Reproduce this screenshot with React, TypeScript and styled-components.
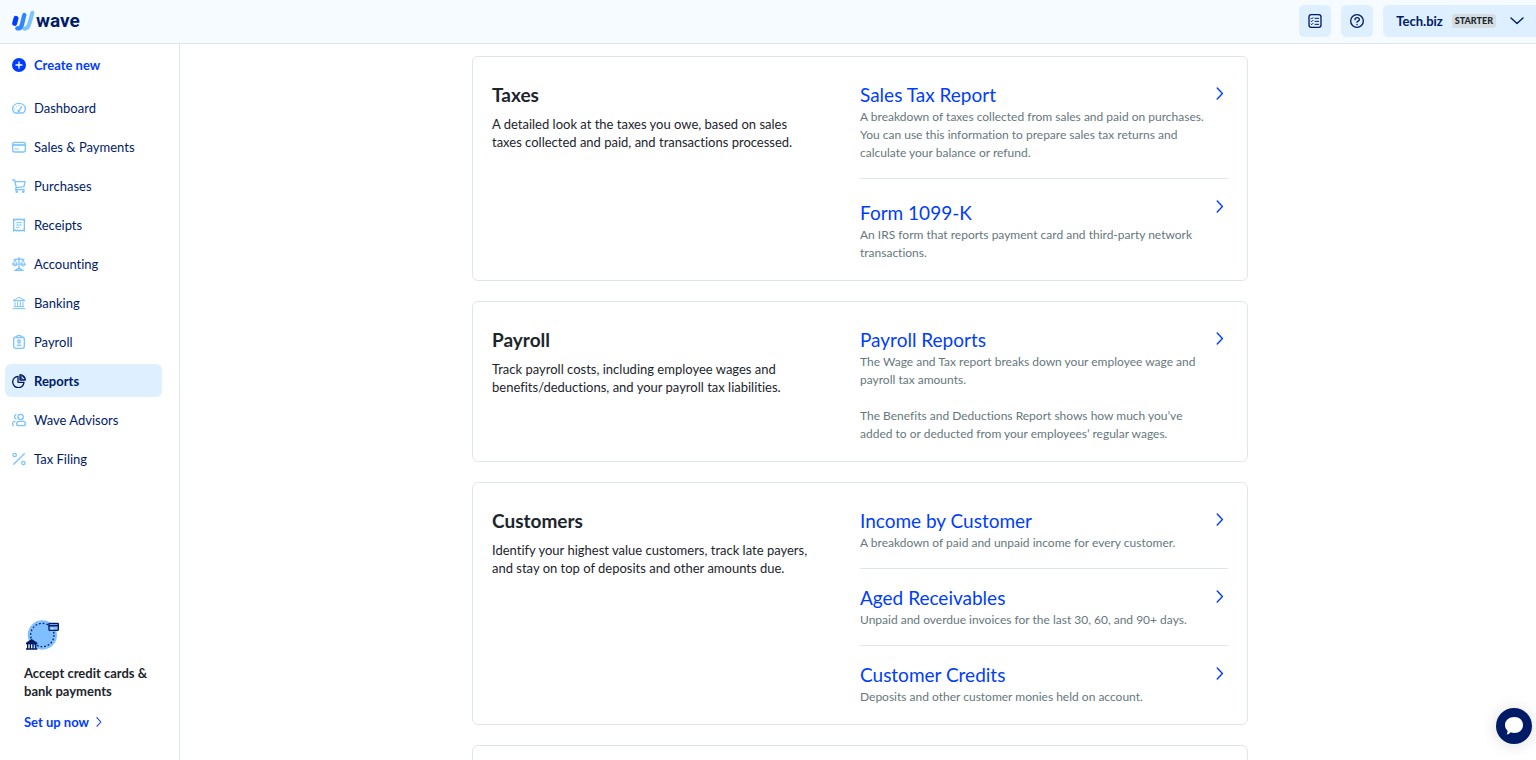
import React from "react";
import styled, { createGlobalStyle, css } from "styled-components";

const colors = {
  navy: "#001b66",
  blue: "#003dff",
  sky: "#7cc4ff",
  ink: "#1c252c",
  muted: "#66777c",
  line: "#dfe6ea",
  tint: "#def0ff",
  header: "#f5fbff",
};

const GlobalStyle = createGlobalStyle`
  *, *::before, *::after { box-sizing: border-box; }
  body {
    margin: 0;
    background: #fff;
    color: ${colors.ink};
    font-family: Lato, "Open Sans", sans-serif;
    font-size: 13px;
    font-variant-ligatures: none;
    line-height: 18px;
  }
  a { color: inherit; text-decoration: none; }
  button { font: inherit; color: inherit; border: 0; margin: 0; cursor: pointer; }
  h2, h3, p, ul { margin: 0; padding: 0; }
  ul { list-style: none; }
  svg { display: block; flex: none; }
`;

const Page = styled.div`
  height: 100vh;
  display: flex;
  flex-direction: column;
  overflow: hidden;
`;

const Header = styled.header`
  flex: none;
  height: 44px;
  display: flex;
  align-items: center;
  justify-content: space-between;
  padding: 0 0 2px 12px;
  background: ${colors.header};
  border-bottom: 1px solid ${colors.line};
`;

const Brand = styled.a`
  display: flex;
  align-items: center;
  gap: 1px;
  color: ${colors.navy};
  font-family: Roboto, sans-serif;
  font-size: 19px;
  font-weight: 700;
  line-height: 20px;
`;

const HeaderActions = styled.div`
  display: flex;
  gap: 10px;
`;

const IconButton = styled.button`
  width: 32px;
  height: 32px;
  padding: 0;
  display: grid;
  place-items: center;
  border-radius: 5px;
  background: ${colors.tint};
  color: ${colors.navy};
`;

const AccountButton = styled.button`
  height: 32px;
  display: flex;
  align-items: center;
  padding: 0 12px 0 13px;
  border-radius: 5px 0 0 5px;
  background: ${colors.tint};
  color: ${colors.navy};
  font-weight: 700;
`;

const PlanBadge = styled.span`
  margin: 0 14px 0 9px;
  padding: 0 3px;
  border-radius: 3px;
  background: #d4dde2;
  color: ${colors.ink};
  font-size: 9px;
  font-weight: 900;
  line-height: 14px;
`;

const Body = styled.div`
  flex: 1;
  min-height: 0;
  display: flex;
`;

const Sidebar = styled.aside`
  flex: none;
  width: 180px;
  display: flex;
  flex-direction: column;
  justify-content: space-between;
  padding: 4px 17px 29px 5px;
  border-right: 1px solid ${colors.line};
`;

const NavList = styled.ul`
  display: flex;
  flex-direction: column;
  gap: 6px;
  margin-top: 10px;
`;

const itemLayout = css`
  width: 100%;
  height: 33px;
  display: flex;
  align-items: center;
  gap: 8px;
  padding: 0 7px;
  border-radius: 6px;
`;

const CreateButton = styled.button`
  ${itemLayout}
  background: none;
  color: ${colors.blue};
  font-weight: 700;
`;

const NavLink = styled.a<{ $active?: boolean }>`
  ${itemLayout}
  color: ${colors.navy};
  font-weight: ${(p) => (p.$active ? 700 : 400)};
  background: ${(p) => (p.$active ? colors.tint : "transparent")};
  svg { color: ${(p) => (p.$active ? colors.navy : colors.sky)}; }
`;

const Promo = styled.section`
  padding-left: 19px;
`;

const PromoTitle = styled.p`
  margin: 13px 0;
  font-weight: 700;
`;

const PromoLink = styled.a`
  display: flex;
  align-items: center;
  gap: 7px;
  color: ${colors.blue};
  font-weight: 700;
`;

const Main = styled.main`
  flex: 1;
  min-width: 0;
  overflow: hidden;
  padding: 12px 16px 0 20px;
`;

const CardStack = styled.div`
  max-width: 776px;
  margin: 0 auto;
  display: flex;
  flex-direction: column;
  gap: 20px;
`;

const Card = styled.section`
  display: grid;
  grid-template-columns: 1fr 1fr;
  min-height: 120px;
  padding: 9px 19px 2px;
  border: 1px solid ${colors.line};
  border-radius: 6px;
`;

const CardIntro = styled.div`
  padding: 16px 48px 0 0;
`;

const CardTitle = styled.h2`
  margin-bottom: 8px;
  font-size: 19px;
  font-weight: 700;
  line-height: 25px;
`;

const ReportItem = styled.li`
  & + & { border-top: 1px solid ${colors.line}; }
`;

const ReportLink = styled.a`
  display: flex;
  justify-content: space-between;
  padding: 16px 4px 16px 0;
  > svg {
    color: ${colors.blue};
    margin-top: 5px;
  }
`;

const ReportBody = styled.div<{ $spaced?: boolean }>`
  max-width: 348px;
  padding-top: ${(p) => (p.$spaced ? 5 : 0)}px;
`;

const ReportName = styled.h3`
  color: ${colors.blue};
  font-size: 19px;
  font-weight: 400;
  line-height: 26px;
`;

const ReportText = styled.p`
  color: ${colors.muted};
  font-size: 12px;
  & + & { margin-top: 18px; }
`;

const ChatButton = styled.button`
  position: fixed;
  right: 4px;
  bottom: 16px;
  width: 36px;
  height: 36px;
  padding: 0;
  display: grid;
  place-items: center;
  border-radius: 50%;
  background: ${colors.navy};
  color: #fff;
  box-shadow: 0 1px 16px rgba(0, 0, 0, 0.14);
`;

type GlyphProps = { children: React.ReactNode; size?: number };

const Glyph = ({ children, size = 14 }: GlyphProps) => (
  <svg
    width={size}
    height={size}
    viewBox="0 0 42 42"
    fill="none"
    stroke="currentColor"
    strokeWidth="4"
    strokeLinecap="round"
    strokeLinejoin="round"
    aria-hidden="true"
  >
    {children}
  </svg>
);

const ChevronRight = ({ width, height }: { width: number; height: number }) => (
  <svg width={width} height={height} viewBox="0 0 8 14" fill="none" stroke="currentColor" strokeWidth="1.5" strokeLinecap="round" strokeLinejoin="round" aria-hidden="true">
    <path d="M1 1l5.6 6L1 13" />
  </svg>
);

const icons = {
  dashboard: (
    <>
      <path d="M9 36C4 33 2 28 2 24 2 14 10 7 21 7s19 7 19 17c0 4-2 9-7 12z" />
      <path d="M22 28l7-11" />
      <circle cx="20" cy="30" r="2" />
      <path d="M8 24h1M13 16l1 1M21 13v1" strokeWidth="3" />
    </>
  ),
  card: (
    <>
      <rect x="2" y="7" width="38" height="29" rx="6" />
      <path d="M3 13h36v4H3z" fill="currentColor" stroke="none" />
      <path d="M3 12h36v6H3z" fill="currentColor" stroke="none" opacity="0.6" />
      <path d="M9 27h11" strokeWidth="3" />
    </>
  ),
  cart: (
    <>
      <path d="M2 3h6l5 24-3 5h27M9 8h30l-3 15-23 3" />
      <circle cx="14" cy="38" r="2" />
      <circle cx="34" cy="38" r="2" />
    </>
  ),
  receipt: (
    <>
      <path d="M5 3l4 3 4-3 4 3 4-3 4 3 4-3 4 3 4-3v36l-4-3-4 3-4-3-4 3-4-3-4 3-4-3-4 3z" />
      <path d="M14 14h14M14 21h14M14 28h7" strokeWidth="3" />
    </>
  ),
  scales: (
    <>
      <path d="M21 2v34M8 40h26M13 38l8-5 8 5M6 7h8l7-2 7 2h8" />
      <path d="M9 9L3 21M9 9l6 12M33 9l-6 12M33 9l6 12" strokeWidth="3" />
      <path d="M2 21h14c0 8-14 8-14 0zM26 21h14c0 8-14 8-14 0z" fill="currentColor" fillOpacity="0.5" strokeWidth="3" />
    </>
  ),
  bank: (
    <path d="M4 13L21 4l17 9zM3 38h36M7 32h28M9 17v14M17 17v14M25 17v14M33 17v14" strokeWidth="3" />
  ),
  badge: (
    <>
      <path d="M14 6h-2a7 7 0 0 0-7 7v20a7 7 0 0 0 7 7h18a7 7 0 0 0 7-7V13a7 7 0 0 0-7-7h-2" />
      <path d="M14 8V5a4 4 0 0 1 4-3h6a4 4 0 0 1 4 3v3z" />
      <circle cx="21" cy="19" r="4" />
      <path d="M15 32h12M17 27h8" strokeWidth="3" />
    </>
  ),
  pie: (
    <>
      <path d="M18 7A17 17 0 1 0 36 25H18z" />
      <path d="M24 2c9 0 16 7 16 16H24z" />
      <path d="M25 9l8 8M31 6l6 7M28 5l-2 11" strokeWidth="3" />
    </>
  ),
  people: (
    <>
      <circle cx="26" cy="12" r="8" />
      <path d="M21 25h12a7 7 0 0 1 7 7c0 5-2 6-6 6H20c-4 0-6-2-6-6a7 7 0 0 1 7-7z" />
      <path d="M12 18a7 7 0 0 1 0-13M9 25c-5 1-7 3-7 7 0 3 0 4 2 6" />
    </>
  ),
  percent: (
    <>
      <circle cx="8" cy="9" r="5" />
      <circle cx="34" cy="33" r="5" />
      <path d="M37 5L5 37" />
    </>
  ),
};

const WaveMark = () => (
  <svg width="23" height="21" viewBox="0 0 69 63" aria-hidden="true" fill="none" strokeLinecap="round">
    <path d="M61 8c-3 12-6 24-10 36-3 9-8 12-14 12" stroke="#7cc4ff" strokeWidth="12" />
    <path d="M37 15c-3 10-5 21-8 31-2 7-7 10-13 9" stroke="#2f86ff" strokeWidth="13" />
    <path d="M12 25L8 40" stroke="#003dff" strokeWidth="15" />
  </svg>
);

const PaymentsArt = () => (
  <svg width="36" height="32" viewBox="0 0 108 96" aria-hidden="true">
    <circle cx="55" cy="48" r="44" fill="#80bfff" />
    <circle cx="55" cy="48" r="35" fill="none" stroke={colors.navy} strokeWidth="4" strokeDasharray="5 6" />
    <rect x="75" y="13" width="28" height="21" rx="2" fill="#80bfff" stroke={colors.navy} strokeWidth="4" />
    <path d="M74 20h29" stroke={colors.navy} strokeWidth="5" />
    <path d="M82 29h6" stroke="#fff" strokeWidth="3" />
    <path d="M6 71l17-11 17 11v5H6z" fill={colors.navy} />
    <path d="M11 75v14M19 75v14M27 75v14M35 75v14M6 90h34" stroke={colors.navy} strokeWidth="4" />
  </svg>
);

const navItems: { label: string; icon: keyof typeof icons; active?: boolean }[] = [
  { label: "Dashboard", icon: "dashboard" },
  { label: "Sales & Payments", icon: "card" },
  { label: "Purchases", icon: "cart" },
  { label: "Receipts", icon: "receipt" },
  { label: "Accounting", icon: "scales" },
  { label: "Banking", icon: "bank" },
  { label: "Payroll", icon: "badge" },
  { label: "Reports", icon: "pie", active: true },
  { label: "Wave Advisors", icon: "people" },
  { label: "Tax Filing", icon: "percent" },
];

type Report = { name: string; text: string[]; spaced?: boolean };

const groups: { title: string; intro: string; reports: Report[] }[] = [
  {
    title: "Taxes",
    intro: "A detailed look at the taxes you owe, based on sales taxes collected and paid, and transactions processed.",
    reports: [
      {
        name: "Sales Tax Report",
        text: ["A breakdown of taxes collected from sales and paid on purchases. You can use this information to prepare sales tax returns and calculate your balance or refund."],
      },
      {
        name: "Form 1099-K",
        text: ["An IRS form that reports payment card and third-party network transactions."],
        spaced: true,
      },
    ],
  },
  {
    title: "Payroll",
    intro: "Track payroll costs, including employee wages and benefits/deductions, and your payroll tax liabilities.",
    reports: [
      {
        name: "Payroll Reports",
        text: [
          "The Wage and Tax report breaks down your employee wage and payroll tax amounts.",
          "The Benefits and Deductions Report shows how much you’ve added to or deducted from your employees’ regular wages.",
        ],
      },
    ],
  },
  {
    title: "Customers",
    intro: "Identify your highest value customers, track late payers, and stay on top of deposits and other amounts due.",
    reports: [
      { name: "Income by Customer", text: ["A breakdown of paid and unpaid income for every customer."] },
      { name: "Aged Receivables", text: ["Unpaid and overdue invoices for the last 30, 60, and 90+ days."] },
      { name: "Customer Credits", text: ["Deposits and other customer monies held on account."] },
    ],
  },
];

export default function App() {
  return (
    <Page>
      <GlobalStyle />
      <Header>
        <Brand href="#">
          <WaveMark />
          wave
        </Brand>
        <HeaderActions>
          <IconButton aria-label="Checklist">
            <Glyph>
              <rect x="3" y="2" width="36" height="38" rx="7" />
              <path d="M9 13l2 2 4-4M9 21l2 2 4-4M9 30l2 2 4-4M21 13h11M21 22h11M21 31h11" strokeWidth="3" />
            </Glyph>
          </IconButton>
          <IconButton aria-label="Help">
            <Glyph>
              <circle cx="21" cy="21" r="19" />
              <path d="M15 17c0-8 13-8 13 0 0 5-7 4-7 8M21 31v1" />
            </Glyph>
          </IconButton>
          <AccountButton>
            Tech.biz
            <PlanBadge>STARTER</PlanBadge>
            <svg width="14" height="8" viewBox="0 0 14 8" fill="none" stroke="currentColor" strokeWidth="1.4" strokeLinecap="round" strokeLinejoin="round" aria-hidden="true">
              <path d="M1 1l6 5.6L13 1" />
            </svg>
          </AccountButton>
        </HeaderActions>
      </Header>
      <Body>
        <Sidebar>
          <nav>
            <CreateButton>
              <svg width="14" height="14" viewBox="0 0 14 14" aria-hidden="true">
                <circle cx="7" cy="7" r="7" fill="currentColor" />
                <path d="M7 4v6M4 7h6" stroke="#fff" strokeWidth="1.3" strokeLinecap="round" />
              </svg>
              Create new
            </CreateButton>
            <NavList>
              {navItems.map((item) => (
                <li key={item.label}>
                  <NavLink href="#" $active={item.active}>
                    <Glyph>{icons[item.icon]}</Glyph>
                    {item.label}
                  </NavLink>
                </li>
              ))}
            </NavList>
          </nav>
          <Promo>
            <PaymentsArt />
            <PromoTitle>Accept credit cards &amp; bank payments</PromoTitle>
            <PromoLink href="#">
              Set up now
              <ChevronRight width={6} height={10} />
            </PromoLink>
          </Promo>
        </Sidebar>
        <Main>
          <CardStack>
            {groups.map((group) => (
              <Card key={group.title}>
                <CardIntro>
                  <CardTitle>{group.title}</CardTitle>
                  <p>{group.intro}</p>
                </CardIntro>
                <ul>
                  {group.reports.map((report) => (
                    <ReportItem key={report.name}>
                      <ReportLink href="#">
                        <ReportBody $spaced={report.spaced}>
                          <ReportName>{report.name}</ReportName>
                          {report.text.map((t) => (
                            <ReportText key={t}>{t}</ReportText>
                          ))}
                        </ReportBody>
                        <ChevronRight width={8} height={13} />
                      </ReportLink>
                    </ReportItem>
                  ))}
                </ul>
              </Card>
            ))}
            <Card />
          </CardStack>
        </Main>
      </Body>
      <ChatButton aria-label="Open chat">
        <svg width="20" height="20" viewBox="0 0 20 20" aria-hidden="true">
          <path d="M10.500 1C15.500 1 19 4.500 19 9s-3.500 8-8.500 8c-1.500 0-2.800-.2-4-.8C5.500 17.500 4 18.500 2.500 18.500c.8-1 1.200-2.500 1-3.800C2 13.300 1 11.300 1 9c0-4.500 4-8 9.500-8z" fill="currentColor" />
        </svg>
      </ChatButton>
    </Page>
  );
}
